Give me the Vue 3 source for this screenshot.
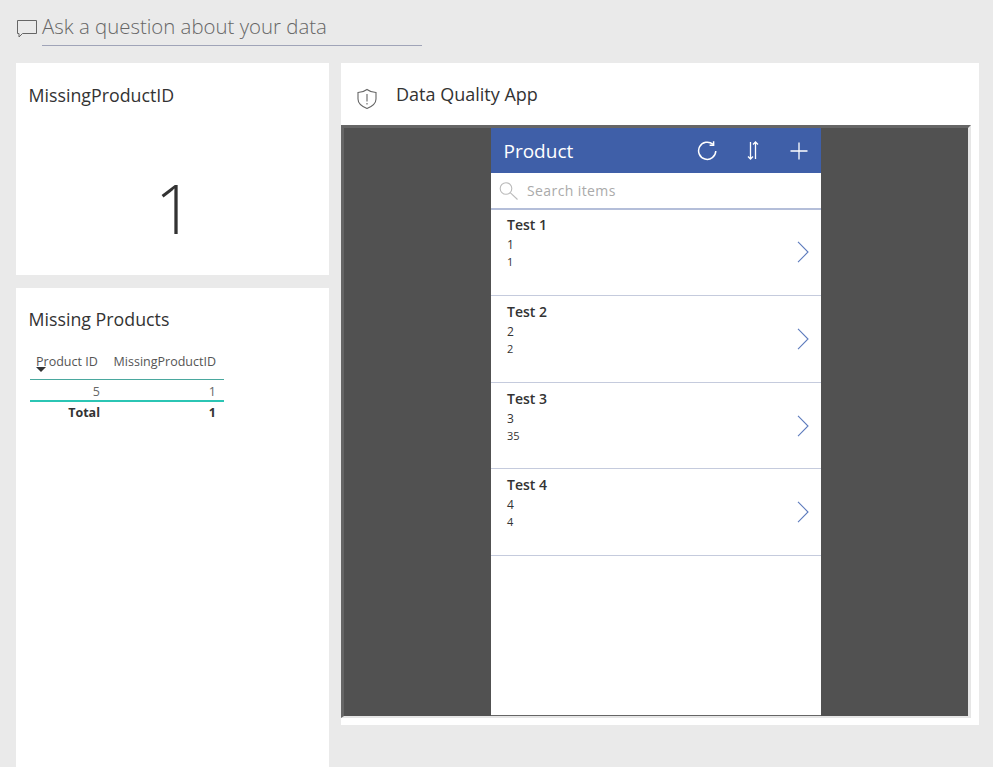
<script setup>
const items = [
  { t: 'Test 1', a: '1', b: '1' },
  { t: 'Test 2', a: '2', b: '2' },
  { t: 'Test 3', a: '3', b: '35' },
  { t: 'Test 4', a: '4', b: '4' },
]
</script>

<template>
  <div class="page">
    <div class="qa">
      <svg class="qa-icon" width="22" height="20" viewBox="0 0 22 20" fill="none" stroke="#666" stroke-width="1">
        <path d="M1.5 1.5H20.5V14.5H6.5L3 18V14.5H1.5Z" />
      </svg>
      <div class="qa-text">Ask a question about your data</div>
    </div>
    <div class="main">
      <div class="left">
        <section class="card kpi">
          <h2 class="title">MissingProductID</h2>
          <div class="value">1</div>
        </section>
        <section class="card tablecard">
          <h2 class="title">Missing Products</h2>
          <div class="table">
            <div class="row head">
              <span class="c1">Product ID<i class="sort"></i></span>
              <span class="c2">MissingProductID</span>
            </div>
            <div class="row body">
              <span class="c1 r">5</span>
              <span class="c2">1</span>
            </div>
            <div class="row total">
              <span class="c1 r">Total</span>
              <span class="c2">1</span>
            </div>
          </div>
        </section>
      </div>
      <section class="card app">
        <div class="app-head">
          <svg class="shield" width="22" height="22" viewBox="0 0 22 22" fill="none" stroke="#666" stroke-width="1.1">
            <path d="M11 1.5C13.5 3.5 16.5 4.3 20 4.5V11C20 15.5 16 18.5 11 20.5C6 18.5 2 15.5 2 11V4.5C5.5 4.3 8.5 3.5 11 1.5Z" />
            <path d="M11 6V13.5M11 15V16.5" />
          </svg>
          <h2 class="app-title">Data Quality App</h2>
        </div>
        <div class="frame">
          <div class="phone">
            <div class="bar">
              <span class="bar-title">Product</span>
              <svg class="b1" width="20" height="20" viewBox="0 0 20 20" fill="none" stroke="#fff" stroke-width="1.5">
                <path d="M16 3.4A8.6 8.6 0 1 0 18.8 10" />
                <path d="M16.6 0.2V4.2H12.6" />
              </svg>
              <svg class="b2" width="12" height="19" viewBox="0 0 12 19" fill="none" stroke="#fff" stroke-width="1.3">
                <path d="M3.5 1V18M1 15.5L3.5 18L6 15.5" />
                <path d="M8.5 18V1M6 3.5L8.5 1L11 3.5" />
              </svg>
              <svg class="b3" width="18" height="18" viewBox="0 0 18 18" fill="none" stroke="#fff" stroke-width="1.3">
                <path d="M9 0.5V17.5M0.5 9H17.5" />
              </svg>
            </div>
            <div class="search">
              <svg width="19" height="18" viewBox="0 0 19 18" fill="none" stroke="#bbb" stroke-width="1.1">
                <circle cx="7" cy="6.5" r="5.8" />
                <path d="M11.2 10.7L18.5 17.5" />
              </svg>
              <span class="search-text">Search items</span>
            </div>
            <div class="items">
              <div v-for="it in items" :key="it.t" class="item">
                <div class="item-t">{{ it.t }}</div>
                <div class="item-a">{{ it.a }}</div>
                <div class="item-b">{{ it.b }}</div>
                <svg class="chev" width="12" height="22" viewBox="0 0 12 22" fill="none" stroke="#5d7bbd" stroke-width="1.1">
                  <path d="M1 0.8L11 11L1 21.2" />
                </svg>
              </div>
            </div>
          </div>
        </div>
      </section>
    </div>
  </div>
</template>

<style>
html, body { margin: 0; background: #eaeaea; overflow: hidden; }
</style>

<style scoped>
.page {
  width: 993px;
  height: 767px;
  overflow: hidden;
  background: #eaeaea;
  font-family: "Open Sans", "Noto Sans", sans-serif;
  color: #333;
  box-sizing: border-box;
  padding: 12px 0 0 16px;
}
.qa { display: flex; align-items: flex-start; height: 51px; }
.qa-icon { margin: 7px 4px 0 0; }
.qa-text {
  width: 380px;
  height: 34px;
  box-sizing: border-box;
  border-bottom: 1px solid #a0a4b8;
  font-size: 20.4px;
  font-weight: 300;
  line-height: 28px;
  color: #666;
}
.main { display: flex; gap: 12px; align-items: flex-start; }
.left { width: 313px; display: flex; flex-direction: column; gap: 13px; }
.card { background: #fff; }
.title {
  margin: 0;
  font-size: 17.8px;
  font-weight: 400;
  line-height: 24px;
  color: #333;
  padding: 20px 0 0 12.5px;
}
.kpi { height: 212px; }
.value {
  text-align: center;
  font-size: 68px;
  font-weight: 300;
  line-height: 80px;
  margin-top: 61px;
  padding-left: 4px;
  color: #333;
}
.tablecard { height: 479px; }
.tablecard .title { padding-top: 19px; }
.table { margin: 22px 0 0 14px; width: 194px; font-size: 12.5px; }
.row { display: flex; justify-content: space-between; padding-right: 8px; }
.c1 { width: 70px; position: relative; box-sizing: border-box; padding-left: 6px; white-space: nowrap; }
.c1.r { text-align: right; padding: 0; }
.c2 { text-align: right; white-space: nowrap; }
.head { height: 26px; line-height: 17px; color: #555; border-bottom: 1px solid #4aa89e; }
.sort {
  position: absolute;
  left: 6px;
  top: 14px;
  border-left: 5px solid transparent;
  border-right: 5px solid transparent;
  border-top: 5px solid #333;
}
.body { height: 20px; line-height: 24px; color: #666; border-bottom: 2px solid #2bc5b4; }
.total { line-height: 22px; font-weight: 700; color: #333; }
.app { width: 638px; height: 662px; }
.app-head { height: 62px; display: flex; align-items: center; padding: 8px 0 0 15px; box-sizing: border-box; }
.shield { margin-top: 2px; }
.app-title { margin: 0 0 8px 18px; font-size: 18px; font-weight: 400; color: #333; line-height: 24px; }
.frame {
  width: 630px;
  height: 593px;
  box-sizing: border-box;
  background: #515151;
  border-top: 3px solid #666;
  border-left: 3px solid #666;
  border-right: 3px solid #e6e6e6;
  border-bottom: 2px solid #e6e6e6;
  display: flex;
  justify-content: center;
}
.phone {
  width: 330px;
  height: 587px;
  background: #fff;
  border-bottom: 1px solid #666;
}
.bar {
  height: 45px;
  background: #3f5fa8;
  color: #fff;
  display: flex;
  align-items: center;
  padding-left: 12.5px;
}
.bar-title { font-size: 19px; width: 179.5px; font-weight: 400; }
.b1 { margin-left: 14px; }
.b2 { margin-left: 30px; }
.b3 { margin-left: 31px; }
.search {
  height: 35px;
  border-bottom: 2px solid #b4bed9;
  display: flex;
  align-items: center;
  padding-left: 8px;
}
.search-text { margin-left: 9px; font-size: 14px; color: #aaa; letter-spacing: 0.4px; }
.items { margin-top: -0.7px; }
.item {
  height: 85.67px;
  border-bottom: 1px solid #c5cbdd;
  position: relative;
  padding-left: 16px;
  color: #333;
}
.item-t { font-size: 14px; font-weight: 600; line-height: 18px; padding-top: 7px; }
.item-a { font-size: 12px; line-height: 17px; margin-top: 2px; }
.item-b { font-size: 11px; line-height: 17px; }
.chev { position: absolute; right: 12px; top: 32px; }
</style>
